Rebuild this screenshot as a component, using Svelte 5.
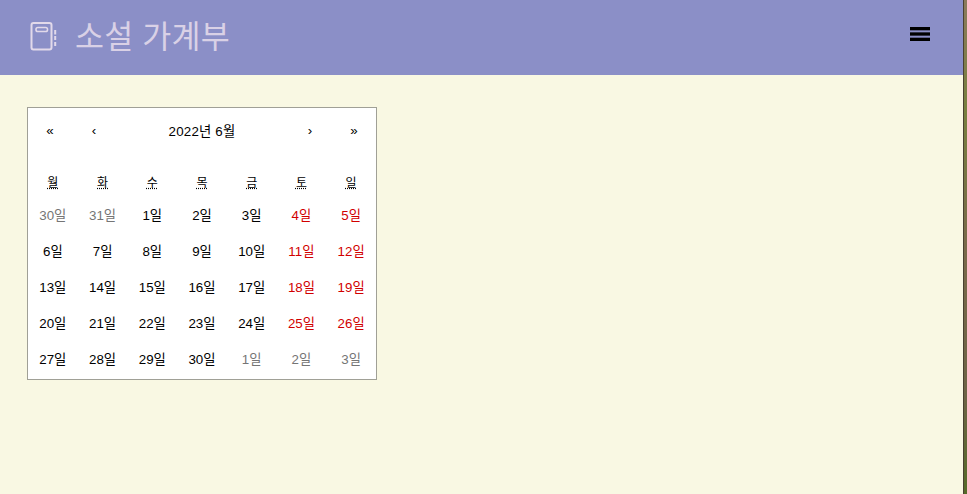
<script>
  const weekdays = ["월", "화", "수", "목", "금", "토", "일"];

  const june = [
    [30, 31, 1, 2, 3, 4, 5],
    [6, 7, 8, 9, 10, 11, 12],
    [13, 14, 15, 16, 17, 18, 19],
    [20, 21, 22, 23, 24, 25, 26],
    [27, 28, 29, 30, 1, 2, 3],
  ];

  function dayClass(row, col) {
    const value = june[row][col];
    if ((row === 0 && value > 20) || (row === 4 && value < 10)) return "day other";
    if (col >= 5) return "day weekend";
    return "day";
  }
</script>

<div class="page">
  <div class="window">
    <header class="topbar">
      <div class="brand">
        <svg class="logo" width="28" height="30" viewBox="0 0 28 30" fill="none" stroke="currentColor" stroke-width="2">
          <rect x="2.5" y="2" width="20" height="26.5" rx="2" />
          <rect x="7" y="6.5" width="11.5" height="4" rx="1.8" stroke-width="1.6" />
          <path d="M26.2 9v4.5M26.2 15v4M26.2 21v4" />
        </svg>
        <span class="title">소설 가계부</span>
      </div>
      <button class="menu" aria-label="메뉴">
        <svg width="20" height="14" viewBox="0 0 20 14" fill="#000">
          <rect y="0" width="20" height="3.3" />
          <rect y="5.35" width="20" height="3.3" />
          <rect y="10.7" width="20" height="3.3" />
        </svg>
      </button>
    </header>

    <main class="content">
      <div class="calendar">
        <div class="nav">
          <button>«</button>
          <button>‹</button>
          <button class="label">2022년 6월</button>
          <button>›</button>
          <button>»</button>
        </div>

        <div class="weekdays">
          {#each weekdays as name}
            <div class="weekday"><abbr>{name}</abbr></div>
          {/each}
        </div>

        <div class="days">
          {#each june as week, row}
            {#each week as value, col}
              <button class={dayClass(row, col)}>{value}일</button>
            {/each}
          {/each}
        </div>
      </div>
    </main>
  </div>
  <div class="edge"></div>
</div>

<style>
  :global(body) {
    margin: 0;
    background-color: #f9f8e3;
  }

  .page {
    display: flex;
    height: 494px;
    font-family: "Liberation Sans", "Noto Sans CJK KR", sans-serif;
    background-color: #f9f8e3;
  }

  .window {
    flex: 1;
    min-width: 0;
  }

  .edge {
    width: 3px;
    border-left: 1px solid #4a4030;
    background: linear-gradient(#8a7a5c 0%, #78803f 22%, #7a6a4a 50%, #6e6446 80%, #566a28 100%);
  }

  .topbar {
    display: flex;
    align-items: center;
    justify-content: space-between;
    box-sizing: border-box;
    height: 75px;
    padding: 0 33px 3px 29px;
    background-color: #8b8fc7;
  }

  .brand {
    display: flex;
    align-items: center;
    gap: 18px;
    color: #e2d9ea;
  }

  .logo {
    display: block;
  }

  .title {
    font-size: 31.5px;
    line-height: 36px;
    margin-top: 2px;
    letter-spacing: 0.2px;
    white-space: nowrap;
    color: #d9d1e6;
  }

  .menu {
    display: block;
    margin-bottom: 4px;
    padding: 0;
  }

  .menu svg {
    display: block;
  }

  .content {
    padding: 32px 27px;
  }

  .calendar {
    box-sizing: border-box;
    width: 350px;
    padding-bottom: 3px;
    border: 1px solid #a0a096;
    background-color: #fff;
    font-size: 13.33px;
  }

  button {
    font-family: inherit;
    font-size: inherit;
    color: #000;
    background: none;
    border: 0;
    margin: 0;
  }

  .nav {
    display: flex;
    height: 44px;
    margin-bottom: 13px;
  }

  .nav button {
    min-width: 44px;
    padding: 1px 0 0;
  }

  .nav .label {
    flex-grow: 1;
    letter-spacing: 0.2px;
  }

  .weekdays {
    display: grid;
    grid-template-columns: repeat(7, 1fr);
    font-size: 12px;
    text-align: center;
  }

  .weekday {
    padding: 8px 8px 6px;
  }

  abbr {
    text-decoration: underline dotted;
  }

  .days {
    display: grid;
    grid-template-columns: repeat(7, 1fr);
    grid-auto-rows: 36px;
  }

  .day {
    padding: 0;
  }

  .weekend {
    color: #d10000;
  }

  .other {
    color: #757575;
  }
</style>
